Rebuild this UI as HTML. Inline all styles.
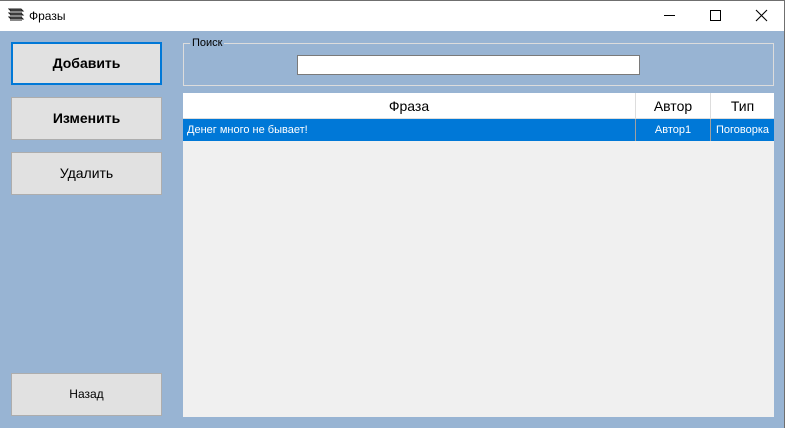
<!DOCTYPE html>
<html><head><meta charset="utf-8"><style>
*{box-sizing:border-box;margin:0;padding:0}
body{width:787px;height:429px;background:#fff;font-family:"Liberation Sans",sans-serif;position:relative;overflow:hidden}
.win{position:absolute;left:0;top:0;width:785px;height:428px;border-top:1px solid #6f6f6f;border-right:1px solid #6f6f6f;border-bottom:1px solid #6f6f6f;background:#fff}
.title{position:absolute;left:0;top:0;width:784px;height:30px;background:#fff}
.title span{position:absolute;left:29px;top:8px;font-size:12px;color:#000}
.body{position:absolute;left:0;top:30px;width:784px;height:397px;background:#98b4d3}
.btn{position:absolute;left:11px;width:151px;height:43px;background:#e1e1e1;border:1px solid #adadad;font-size:14px;text-align:center;line-height:41px;color:#000}
.abs{position:absolute}
</style></head><body>
<div class="win">
<div class="title">
<svg class="abs" style="left:8px;top:6px" width="17" height="16" viewBox="0 0 17 16">
<path d="M1 2h12l2 2H3z M1 6h12l2 2H3z M1 10h12l2 2H3z" fill="#555" stroke="#222" stroke-width="1"/>
<path d="M2 4h12v2H2zM2 8h12v2H2zM2 12h12v2H2z" fill="#888"/>
</svg>
<span>Фразы</span>
<div class="abs" style="left:664px;top:14px;width:11px;height:1px;background:#000"></div>
<div class="abs" style="left:710px;top:9px;width:11px;height:11px;border:1px solid #000"></div>
<svg class="abs" style="left:755px;top:8px" width="13" height="13"><path d="M1 1L12 12M12 1L1 12" stroke="#000" stroke-width="1.1"/></svg>
</div>
<div class="body">
<div class="btn" style="top:11px;border:2px solid #0078d7;line-height:39px;font-weight:bold">Добавить</div>
<div class="btn" style="top:66px;font-weight:bold">Изменить</div>
<div class="btn" style="top:121px">Удалить</div>
<div class="btn" style="top:342px;font-size:12px">Назад</div>
<div class="abs" style="left:183px;top:12px;width:591px;height:43px;border:1px solid #dcdcdc"></div>
<div class="abs" style="left:190px;top:6px;background:#98b4d3;font-size:11px;padding:0 2px">Поиск</div>
<div class="abs" style="left:297px;top:24px;width:343px;height:20px;background:#fff;border:1px solid #7a7a7a"></div>
<div class="abs" style="left:183px;top:62px;width:591px;height:324px;background:#f0f0f0">
<div class="abs" style="left:0;top:0;width:591px;height:26px;background:#fff;border-bottom:1px solid #ddd;font-size:14px">
<div class="abs" style="left:0;width:452px;height:26px;line-height:26px;text-align:center">Фраза</div>
<div class="abs" style="left:452px;width:75px;height:26px;line-height:26px;text-align:center;border-left:1px solid #ddd">Автор</div>
<div class="abs" style="left:527px;width:64px;height:26px;line-height:26px;text-align:center;border-left:1px solid #ddd">Тип</div>
</div>
<div class="abs" style="left:0;top:26px;width:591px;height:22px;background:#0078d7;color:#fff;font-size:11px;line-height:22px">
<div class="abs" style="left:4px">Денег много не бывает!</div>
<div class="abs" style="left:452px;width:75px;height:22px;text-align:center;border-left:1px solid #a0a0a0">Автор1</div>
<div class="abs" style="left:527px;width:64px;height:22px;text-align:center;border-left:1px solid #a0a0a0">Поговорка</div>
</div>
</div>
</div>
</div>
</body></html>
